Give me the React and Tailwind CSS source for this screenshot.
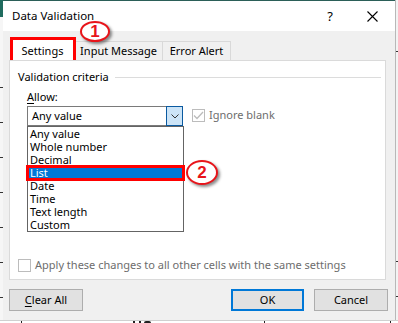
import React from "react";

const FONT = { fontFamily: '"Noto Sans", "Open Sans", sans-serif' };

function Ticks({ ys }) {
  return (
    <div className="relative w-full h-full">
      {ys.map((y) => (
        <div key={y} className="absolute left-0 right-0 h-px bg-[#333]" style={{ top: y }} />
      ))}
    </div>
  );
}

function Ellipse({ n, className }) {
  return (
    <div
      className={`absolute flex items-center justify-center rounded-[50%] border-[2.5px] border-[#e8141a] bg-white text-[#e8141a] font-bold text-[17px] leading-none shadow-[2px_2px_3px_rgba(0,0,0,0.45)] ${className}`}
      style={{ fontFamily: '"Liberation Sans", Arial, sans-serif' }}
    >
      {n}
    </div>
  );
}

export default function App() {
  const items = ["Any value", "Whole number", "Decimal", "List", "Date", "Time", "Text length", "Custom"];
  return (
    <div className="w-[398px] h-[323px] bg-white overflow-hidden flex flex-col text-black" style={FONT}>
      <div className="flex h-[320px]">
        {/* left excel strip */}
        <div className="w-[3px] flex flex-col">
          <div className="h-[17px] bg-[#1f6b5e]" />
          <div className="flex-1 bg-[#f6f6f6]">
            <Ticks ys={[70, 105, 140, 175, 210, 245, 280]} />
          </div>
        </div>

        {/* dialog */}
        <div className="relative w-[392px] h-[320px] flex flex-col bg-[#f0f0f0] border-t border-[#2b5f58]">
          {/* title bar */}
          <div className="h-[30px] bg-white flex items-center pl-[9px] pr-[17px]">
            <span className="text-[11.5px] leading-none">Data Validation</span>
            <span className="ml-auto text-[13px] leading-none mr-[34px]">?</span>
            <svg width="11" height="11" viewBox="0 0 11 11">
              <path d="M0.5 0.5 L10.5 10.5 M10.5 0.5 L0.5 10.5" stroke="#000" strokeWidth="1.1" />
            </svg>
          </div>

          {/* tabs */}
          <div className="relative h-[29px] flex items-end pl-[7px]">
            <div className="w-[65px] h-[22px] bg-white border-l border-t border-r border-[#d9d9d9] flex items-center justify-center text-[11px] relative top-[1px] pt-[1px]">
              Settings
            </div>
            <div className="w-[88px] h-[19px] border-t border-r border-[#d9d9d9] flex items-center justify-center text-[11px] pt-[1px]">
              Input Message
            </div>
            <div className="w-[68px] h-[19px] border-t border-r border-[#d9d9d9] flex items-center justify-center text-[11px] pt-[1px]">
              Error Alert
            </div>
            {/* annotation box 1 */}
            <div className="absolute left-[7px] top-[6px] w-[66px] h-[26px] border-[3px] border-[#ff0000]" />
            <Ellipse n="1" className="left-[77px] top-[-10px] w-[30px] h-[21px]" />
          </div>

          {/* panel */}
          <div className="ml-[6px] w-[377px] h-[220px] bg-white border border-[#dadada] relative">
            <div className="flex items-center mt-[8px] ml-[8px] mr-[4px]">
              <span className="text-[11px] leading-[16px]">Validation criteria</span>
              <div className="flex-1 h-px bg-[#dcdcdc] ml-[6px]" />
            </div>
            <div className="ml-[17px] mt-[4px] text-[11px] leading-[16px]">
              <span className="underline underline-offset-2">A</span>llow:
            </div>
            <div className="flex items-start ml-[17px] mt-[1px]">
              <div className="relative">
                <div className="w-[156px] h-[20px] border border-[#7a7a7a] bg-white flex">
                  <div className="flex-1 flex items-center pl-[4px] text-[11px]">Any value</div>
                  <div className="w-[17px] h-[20px] -mt-px -mr-px border border-[#0b5aa0] bg-[#cce4f7] flex items-center justify-center">
                    <svg width="8" height="5" viewBox="0 0 8 5">
                      <path d="M0.5 0.5 L4 4 L7.5 0.5" stroke="#333" strokeWidth="1" fill="none" />
                    </svg>
                  </div>
                </div>
                {/* dropdown list */}
                <div className="absolute left-0 top-[20px] w-[157px] h-[106px] border border-[#646464] bg-white flex flex-col z-10">
                  {items.map((it) => (
                    <div
                      key={it}
                      className={`h-[13px] flex items-center pl-[2px] text-[11px] leading-[13px] ${
                        it === "List" ? "bg-[#0078d7] text-white" : ""
                      }`}
                    >
                      {it}
                    </div>
                  ))}
                </div>
                <div className="absolute left-[-1px] top-[59px] w-[159px] h-[16px] border-[3px] border-[#ff0000] z-20" />
                <Ellipse n="2" className="left-[159px] top-[54px] w-[32px] h-[25px] z-20" />
              </div>
              <div className="flex items-center ml-[9px] mt-[1px]">
                <div className="w-[13px] h-[13px] border border-[#bcbcbc] flex items-center justify-center">
                  <svg width="11" height="9" viewBox="0 0 11 9">
                    <path d="M1 4.5 L4 7.5 L10 1" stroke="#bcbcbc" strokeWidth="1.3" fill="none" />
                  </svg>
                </div>
                <span className="ml-[4px] text-[11px] text-[#6d6d6d]">Ignore blank</span>
              </div>
            </div>
            <div className="absolute left-[8px] top-[196px] flex items-center">
              <div className="w-[13px] h-[13px] border border-[#bcbcbc] bg-white" />
              <span className="ml-[4px] text-[11px] text-[#6d6d6d]">
                Apply these changes to all other cells with the same settings
              </span>
            </div>
          </div>

          {/* buttons */}
          <div className="flex mt-[9px] ml-[6px]">
            <div className="w-[74px] h-[22px] bg-[#e1e1e1] border border-[#adadad] flex items-center justify-center text-[11px]">
              <span>
                <span className="underline underline-offset-2">C</span>lear All
              </span>
            </div>
            <div className="w-[73px] h-[22px] ml-[148px] bg-[#e1e1e1] border-2 border-[#0078d7] flex items-center justify-center text-[11px]">
              OK
            </div>
            <div className="w-[74px] h-[22px] ml-[10px] bg-[#e1e1e1] border border-[#adadad] flex items-center justify-center text-[11px]">
              Cancel
            </div>
          </div>
        </div>

        {/* right excel strip */}
        <div className="w-[3px] flex flex-col border-l border-[#b8b8b8] bg-[#f3f3f3]">
          <Ticks ys={[51, 261, 296]} />
        </div>
      </div>
      {/* bottom strip */}
      <div className="h-[3px] border-t border-[#d0d0d0] relative overflow-hidden">
        <div className="absolute left-[21px] top-0 w-px h-[3px] bg-[#222]" />
        <div className="absolute left-[264px] top-0 w-px h-[3px] bg-[#222]" />
        <div className="absolute left-[390px] top-0 w-px h-[3px] bg-[#222]" />
        <div className="absolute left-[133px] top-0 w-[20px] h-[2px] flex gap-[3px]">
          <div className="w-[8px] h-[2px] border-l-2 border-r-2 border-[#222]" />
          <div className="w-[7px] h-[2px] border-t-2 border-[#222] rounded-t-full" />
        </div>
      </div>
    </div>
  );
}
